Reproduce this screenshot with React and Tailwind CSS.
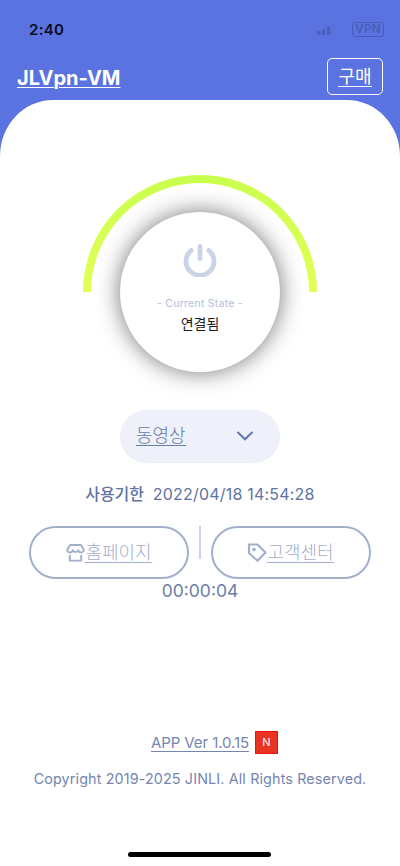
import React from 'react';

const FONT = "font-['Inter','Noto_Sans_CJK_KR',sans-serif]";

function StatusBar() {
  return (
    <div className="flex h-[58px] items-center justify-between pl-[29px] pr-[16px]">
      <span className="text-[15px] font-semibold leading-none tracking-[0.3px] text-[#0b0e1a]">2:40</span>
      <div className="flex items-center gap-[17px]">
        <svg width="18" height="12" viewBox="0 0 18 12" fill="#4a60bb">
          <rect x="0" y="8" width="3.4" height="4" rx="1" />
          <rect x="5" y="6" width="3.4" height="6" rx="1" />
          <rect x="10" y="3" width="3.4" height="9" rx="1" />
          <rect x="15" y="0" width="3" height="12" rx="1" fill="#566fdb" />
        </svg>
        <span className="flex h-[15px] w-[32px] items-center justify-center rounded-[3px] border border-[#475db8] text-[11.5px] font-semibold leading-[13px] tracking-[0.4px] text-[#475db8]">
          VPN
        </span>
      </div>
    </div>
  );
}

function Header() {
  return (
    <div className="flex h-[37px] items-center justify-between pl-[17px] pr-[17px]">
      <a className="pt-[2px] text-[20px] font-bold leading-[24px] text-white underline decoration-1 underline-offset-[2px]">JLVpn-VM</a>
      <button className="flex h-[37px] w-[56px] items-center justify-center rounded-[5px] border-[1.5px] border-white text-[18px] font-normal leading-none text-white">
        <span className="mt-[2px] border-b border-white">구매</span>
      </button>
    </div>
  );
}

function PowerDial() {
  return (
    <div className="relative mx-auto flex h-[234px] w-[234px] items-center justify-center">
      <svg className="absolute inset-0" width="234" height="234" viewBox="0 0 234 234" fill="none">
        <defs>
          <linearGradient id="arc" x1="0" y1="0" x2="0" y2="117" gradientUnits="userSpaceOnUse">
            <stop offset="0" stopColor="#c9ff4d" />
            <stop offset="1" stopColor="#e3ff57" />
          </linearGradient>
        </defs>
        <path d="M4 117a113 113 0 0 1 226 0" stroke="url(#arc)" strokeWidth="8" />
      </svg>
      <button className="relative flex h-[160px] w-[160px] flex-col items-center rounded-full bg-white pt-[31px] shadow-[0_0_22px_1px_rgba(0,0,0,0.5)]">
        <svg width="34" height="34" viewBox="0 0 34 34" fill="none" stroke="#cbd3e6" strokeWidth="4.8" strokeLinecap="round">
          <path d="M17 3.3v12.500M8.200 7.400a14 14 0 1 0 17.600 0" />
        </svg>
        <span className="mt-[20px] text-[10.5px] leading-[13px] tracking-[0.25px] text-[#b3bdd8]">- Current State -</span>
        <span className="mt-[5px] text-[14px] leading-[18px] text-[#1c1c1c]">연결됨</span>
      </button>
    </div>
  );
}

function ShopIcon() {
  return (
    <svg className="ml-px" width="19" height="20" viewBox="0 0 20 20" fill="none" stroke="#a2aecb" strokeWidth="2" strokeLinejoin="round">
      <path d="M5.2 1.500h9.600q1 0 1.500.900l2 3.300c1 2.200-.600 3.800-2.500 3.800-1.600 0-2.600-1-3-2.400C12.300 8.500 11.300 9 10 9S7.700 8.500 7.200 7.100C6.800 8.500 5.800 9.500 4.200 9.500 2.300 9.500.7 7.900 1.700 5.700l2-3.300Q4.200 1.500 5.200 1.500Z" />
      <path d="M4 12v6h12v-6" strokeLinejoin="miter" />
    </svg>
  );
}

function TagIcon() {
  return (
    <svg width="20" height="20" viewBox="0 0 20 20" fill="none" stroke="#a2aecb" strokeWidth="2.1" strokeLinejoin="round">
      <path d="M2 1.500h8.500l8 8-8 8.300L2 10V1.500Z" />
      <circle cx="7" cy="6.500" r="1.800" fill="#a2aecb" stroke="none" />
    </svg>
  );
}

function LinkButton({ icon, label }) {
  return (
    <button className="flex h-[53px] w-[160px] items-center justify-center rounded-full border-2 border-[#a2aecb] pr-px text-[18px] font-light leading-none text-[#a2aecb]">
      {icon}
      <span className="mt-[2px] border-b border-[#a2aecb]">{label}</span>
    </button>
  );
}

export default function App() {
  return (
    <div className={`h-[866px] w-[400px] overflow-hidden bg-white ${FONT}`}>
      <div className="h-[160px] bg-[#5a73e0]">
        <StatusBar />
        <Header />
      </div>

      <main className="relative -mt-[60px] flex h-[766px] flex-col items-center rounded-t-[53px_56px] bg-white pt-[75px]">
        <PowerDial />

        <button className="mt-px flex h-[53px] w-[160px] items-center justify-between rounded-full bg-[#eef1f9] pl-[16px] pr-[26px] text-[18px] font-light leading-none text-[#6b7ca8]">
          <span className="border-b border-[#6b7ca8]">동영상</span>
          <svg className="-mt-px" width="18" height="10" viewBox="0 0 18 10" fill="none" stroke="#6478a6" strokeWidth="2">
            <path d="m1.5 1 7.5 7.3L16.5 1" />
          </svg>
        </button>

        <div className="mt-[21px] flex h-[20px] items-center gap-[9px] text-[#6073a2]">
          <span className="text-[16px] font-medium tracking-[-0.1px]">사용기한</span>
          <span className="text-[16px] tracking-[0.2px]">2022/04/18 14:54:28</span>
        </div>

        <div className="mt-[22px] flex">
          <LinkButton icon={<ShopIcon />} label="홈페이지" />
          <div className="mx-[10px] h-[33px] w-[2px] bg-[#ccd3e5]" />
          <LinkButton icon={<TagIcon />} label="고객센터" />
        </div>

        <div className="mt-px text-[17.5px] leading-[22px] text-[#6b7ca8]">00:00:04</div>

        <footer className="mt-auto flex flex-col items-center pb-[9px] text-[#7485b0]">
          <div className="flex items-center gap-[6px] pl-[29px]">
            <span className="text-[15px] leading-[20px] tracking-[-0.1px] underline underline-offset-[3px]">APP Ver 1.0.15</span>
            <span className="flex h-[23px] w-[23px] items-center justify-center border border-[#f01010] bg-[#e93323] text-[11px] leading-none text-white">N</span>
          </div>
          <p className="mt-[15px] text-[14.3px] leading-[20px] tracking-[0.15px]">Copyright 2019-2025 JINLI. All Rights Reserved.</p>
          <div className="mt-[63px] h-[5px] w-[143px] rounded-full bg-black" />
        </footer>
      </main>
    </div>
  );
}
